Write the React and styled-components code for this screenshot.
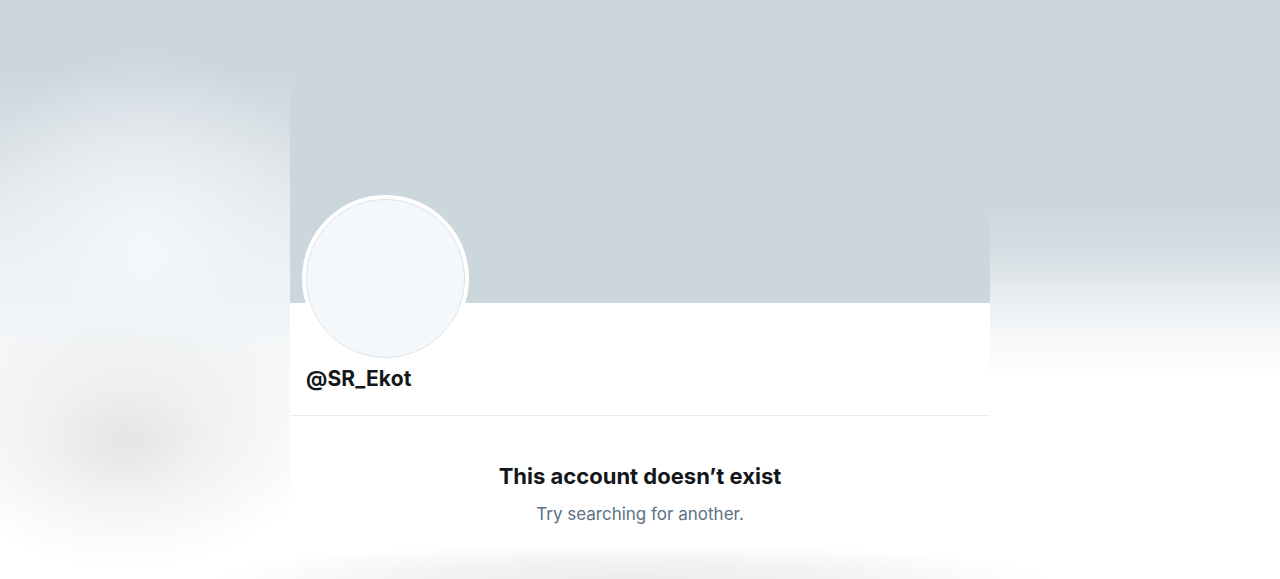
import styled, { createGlobalStyle } from 'styled-components'

const GlobalStyle = createGlobalStyle`
  html, body {
    margin: 0;
    padding: 0;
    background: #fff;
  }
  body {
    font-family: Inter, "Noto Sans", "Liberation Sans", sans-serif;
    -webkit-font-smoothing: antialiased;
  }
`

// blurred photo of the same page behind the card
const Page = styled.div`
  width: 100%;
  height: 579px;
  overflow: hidden;
  display: flex;
  justify-content: center;
  align-items: flex-start;
  padding-top: 80px;
  box-sizing: border-box;
  background:
    radial-gradient(ellipse 420px 36px at 630px 579px, rgba(236, 236, 236, 1) 0%, rgba(240, 240, 240, 0.8) 50%, rgba(245, 245, 245, 0) 100%),
    radial-gradient(ellipse 190px 130px at 125px 440px, rgba(226, 226, 226, 0.9) 0%, rgba(234, 234, 234, 0.55) 45%, rgba(240, 240, 240, 0) 100%),
    radial-gradient(ellipse 190px 200px at 145px 250px, rgba(245, 248, 250, 0.95) 0%, rgba(240, 244, 247, 0.55) 50%, rgba(232, 238, 241, 0) 100%),
    linear-gradient(to bottom, #ccd6dd 0px, #ccd6dd 70px, #dbe2e7 160px, #eaeff2 250px, #f4f6f8 330px, #fafafa 420px, #ffffff 520px) left top / 290px 100% no-repeat,
    linear-gradient(to bottom, #ccd6dd 0px, #ccd6dd 205px, #d8e0e5 260px, #e9eef1 300px, #f8f9fa 345px, #ffffff 380px, #ffffff 100%);
`

const Card = styled.div`
  width: 700px;
  background: #fff;
  display: flex;
  flex-direction: column;
`

const Banner = styled.div`
  height: 223px;
  background: #ccd6dd;
`

const ProfileHeader = styled.div`
  display: flex;
  flex-direction: column;
  padding: 0 16px 24px 16px;
  border-bottom: 1px solid #e6ecf0;
`

const Avatar = styled.div`
  width: 167px;
  height: 167px;
  margin: -108px 0 0 -4px;
  border-radius: 50%;
  background: #fff;
  padding: 4px;
  box-sizing: border-box;
`

const AvatarInner = styled.div`
  width: 100%;
  height: 100%;
  border-radius: 50%;
  background: #f5f8fa;
  border: 1px solid #dde4e9;
  box-sizing: border-box;
`

const Handle = styled.div`
  margin-top: 4px;
  font-size: 21px;
  line-height: 25px;
  font-weight: 700;
  color: #14171a;
  letter-spacing: 0.1px;
`

const EmptyState = styled.div`
  display: flex;
  flex-direction: column;
  align-items: center;
  padding: 46px 0 23px;
  gap: 13px;
`

const Title = styled.div`
  font-size: 22px;
  line-height: 28px;
  font-weight: 700;
  color: #14171a;
`

const Subtitle = styled.div`
  font-size: 17px;
  line-height: 22px;
  color: #5b7083;
`

export default function App() {
  return (
    <>
      <GlobalStyle />
      <Page>
        <Card>
          <Banner />
          <ProfileHeader>
            <Avatar>
              <AvatarInner />
            </Avatar>
            <Handle>@SR_Ekot</Handle>
          </ProfileHeader>
          <EmptyState>
            <Title>This account doesn’t exist</Title>
            <Subtitle>Try searching for another.</Subtitle>
          </EmptyState>
        </Card>
      </Page>
    </>
  )
}
